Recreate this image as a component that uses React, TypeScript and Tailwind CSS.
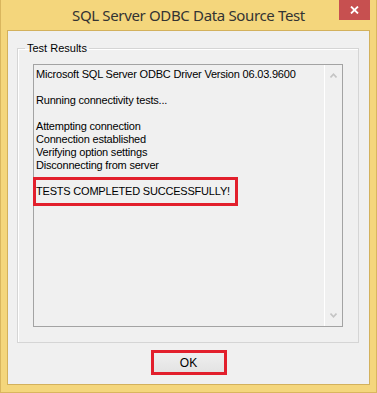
const lines = [
  "Microsoft SQL Server ODBC Driver Version 06.03.9600",
  "",
  "Running connectivity tests...",
  "",
  "Attempting connection",
  "Connection established",
  "Verifying option settings",
  "Disconnecting from server",
  "",
  "TESTS COMPLETED SUCCESSFULLY!",
];

function Chevron({ up }: { up?: boolean }) {
  return (
    <svg width="7" height="5" viewBox="0 0 7 5" className="block">
      <path
        d={up ? "M0.5 4.5 L3.5 1.2 L6.5 4.5" : "M0.5 0.5 L3.5 3.8 L6.5 0.5"}
        fill="none"
        stroke="#c4c4c4"
        strokeWidth="1.6"
      />
    </svg>
  );
}

export default function App() {
  return (
    <div className="w-[377px] h-[393px] bg-[#f4d67c] border border-t-0 border-[#d9b65e] flex flex-col font-['Liberation_Sans',Arial,sans-serif] text-[11px] text-black">
      {/* title bar */}
      <div className="h-[30px] flex shrink-0">
        <div className="w-[37px]" />
        <div className="flex-1 flex items-center justify-center pt-[1px] text-[15px] text-[#333] font-['Noto_Sans',sans-serif] tracking-[-0.35px]">
          SQL Server ODBC Data Source Test
        </div>
        <div className="w-[31px] h-[20px] mr-[6px] bg-[#c75050] flex items-center justify-center">
          <svg width="9" height="8" viewBox="0 0 9 8">
            <path d="M1 0.5 L8 7.5 M8 0.5 L1 7.5" stroke="#fff" strokeWidth="1.8" />
          </svg>
        </div>
      </div>

      {/* client area */}
      <div className="flex-1 mx-[6px] mb-[7px] border border-[#d3b15c] bg-[#f0f0f0] flex flex-col">
        <fieldset className="mt-[10px] ml-[9px] w-[342px] h-[302px] border border-[#d5d5d5] shadow-[inset_1px_1px_0_#fff] p-0 m-0">
          <legend className="ml-[7px] px-[2px] leading-[14px]">Test Results</legend>
          <div className="mt-[9px] ml-[15px] w-[310px] h-[263px] border border-[#a3a3a3] flex relative">
            <div className="flex-1 pl-[2px] pt-[3px] leading-[13px] tracking-[-0.2px]">
              {lines.map((l, i) => (
                <div key={i} className="h-[13px] whitespace-nowrap">{l}</div>
              ))}
            </div>
            <div className="w-[18px] border-l border-white flex flex-col justify-between items-center pt-[8px] pb-[8px]">
              <Chevron up />
              <Chevron />
            </div>
            <div className="absolute left-[-1px] top-[112px] w-[205px] h-[29px] border-[3px] border-[#e21f2c]" />
          </div>
        </fieldset>

        <div className="flex justify-center mt-[7px]">
          <button className="w-[76px] h-[25px] border-[3px] border-[#e21f2c] bg-gradient-to-b from-[#efefef] to-[#e3e3e3] text-[12px] leading-none text-black">
            OK
          </button>
        </div>
      </div>
    </div>
  );
}
